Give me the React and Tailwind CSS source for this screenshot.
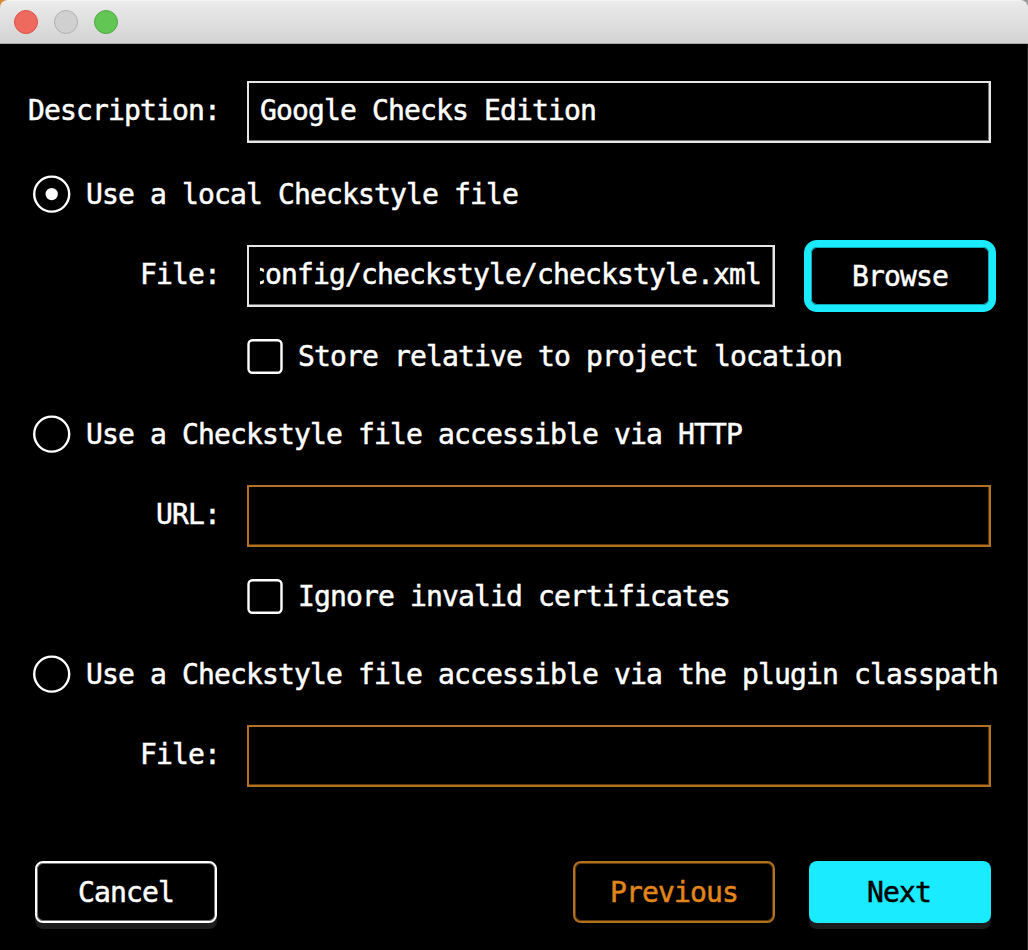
import React from "react";

function Label({ children }) {
  return <label className="w-[220px] shrink-0 pb-[3px] text-right">{children}</label>;
}

function Field({ value = "", disabled = false, width = "w-[744px]", clipped = false }) {
  return (
    <div
      className={`ml-[27px] flex h-[62px] shrink-0 items-center border-2 px-[11px] pb-[2px] ${width} ${
        disabled
          ? "border-[#b2711f] shadow-[inset_-1px_-1px_0_#593810]"
          : "border-[#e6e6e6] shadow-[inset_-1px_-1px_0_#737373]"
      }`}
    >
      <div className={`flex w-full overflow-hidden ${clipped ? "justify-end" : "justify-start"}`}>
        <span className={clipped ? "mr-px shrink-0" : "shrink-0"}>{value}</span>
      </div>
    </div>
  );
}

function Radio({ checked = false, children }) {
  return (
    <div className="flex h-[37px] items-center pl-[33px]">
      <svg className="h-[38px] w-[38px] shrink-0" viewBox="0 0 38 38" fill="none">
        <circle cx="18.7" cy="19.1" r="17.5" stroke="#fff" strokeWidth="2.4" />
        {checked && <circle cx="18.7" cy="19.1" r="6.2" fill="#fff" />}
      </svg>
      <span className="ml-[15px] pt-[2px]">{children}</span>
    </div>
  );
}

function Checkbox({ children }) {
  return (
    <div className="flex h-[35px] items-center pl-[247px]">
      <svg className="h-[35px] w-[36px] shrink-0" viewBox="0 0 36 35" fill="none">
        <rect x="1.5" y="1.2" width="33" height="32.6" rx="4" stroke="#fff" strokeWidth="2.4" />
      </svg>
      <span className="ml-[15px]">{children}</span>
    </div>
  );
}

export default function App() {
  return (
    <div className="flex h-[950px] w-[1028px] flex-col overflow-hidden whitespace-pre bg-black font-['DejaVu_Sans_Mono',monospace] text-[28px] leading-[40px] tracking-[-0.857px] text-white [-webkit-text-stroke:0.5px_currentColor]">
      <header className="h-[44px] shrink-0 bg-linear-to-r from-[#d98a2b] from-0% via-[#8a8a8a] via-2% to-[#9a9a9a]">
        <div className="flex h-full items-center gap-4 rounded-t-[8px] border-b border-t border-b-[#adadad] border-t-[#f5f5f5] bg-linear-to-b from-[#ebebeb] to-[#d3d3d3] pl-[14px]">
          <span className="size-6 rounded-full border border-[#dc5148] bg-[#ee6a5f]" />
          <span className="size-6 rounded-full border border-[#b0b0b0] bg-[#d0d0d0]" />
          <span className="size-6 rounded-full border border-[#52a842] bg-[#62c655]" />
        </div>
      </header>

      <div className="flex grow flex-col border-r border-[#1c1c1c]">
        <main className="flex flex-col pt-[37px]">
          <div className="flex items-center">
            <Label>Description:</Label>
            <Field value="Google Checks Edition" />
          </div>
          <div className="mt-8">
            <Radio checked>Use a local Checkstyle file</Radio>
          </div>
          <div className="mt-7 flex items-center">
            <Label>File:</Label>
            <Field value="config/checkstyle/checkstyle.xml" width="w-[528px]" clipped />
            <button className="ml-[29px] h-[72px] w-[192px] shrink-0 rounded-[13px] border-[7px] border-[#1aebff] pt-[2px] shadow-[inset_0_0_0_1px_#12a5b3]">
              Browse
            </button>
          </div>
          <div className="mt-[27px]">
            <Checkbox>Store relative to project location</Checkbox>
          </div>
          <div className="mt-[41px]">
            <Radio>Use a Checkstyle file accessible via HTTP</Radio>
          </div>
          <div className="mt-[33px] flex items-center">
            <Label>URL:</Label>
            <Field disabled />
          </div>
          <div className="mt-8">
            <Checkbox>Ignore invalid certificates</Checkbox>
          </div>
          <div className="mt-[41px]">
            <Radio>Use a Checkstyle file accessible via the plugin classpath</Radio>
          </div>
          <div className="mt-[33px] flex items-center">
            <Label>File:</Label>
            <Field disabled />
          </div>
        </main>

        <footer className="mt-[74px] flex pl-[35px]">
          <button className="h-[62px] w-[182px] rounded-[8px] border-2 border-white pt-[2px] shadow-[inset_0_0_0_1px_#737373,0_6px_0_#1c1c1c]">
            Cancel
          </button>
          <button className="ml-[356px] h-[62px] w-[202px] rounded-[8px] border-2 border-[#b2711f] pt-[2px] text-[#e0861a] shadow-[inset_0_0_0_1px_#593810]">
            Previous
          </button>
          <button className="ml-[34px] h-[62px] w-[182px] rounded-[8px] bg-[#1aebff] pr-[2px] pt-[2px] text-black shadow-[0_6px_0_#1c1c1c]">
            Next
          </button>
        </footer>
      </div>
    </div>
  );
}
